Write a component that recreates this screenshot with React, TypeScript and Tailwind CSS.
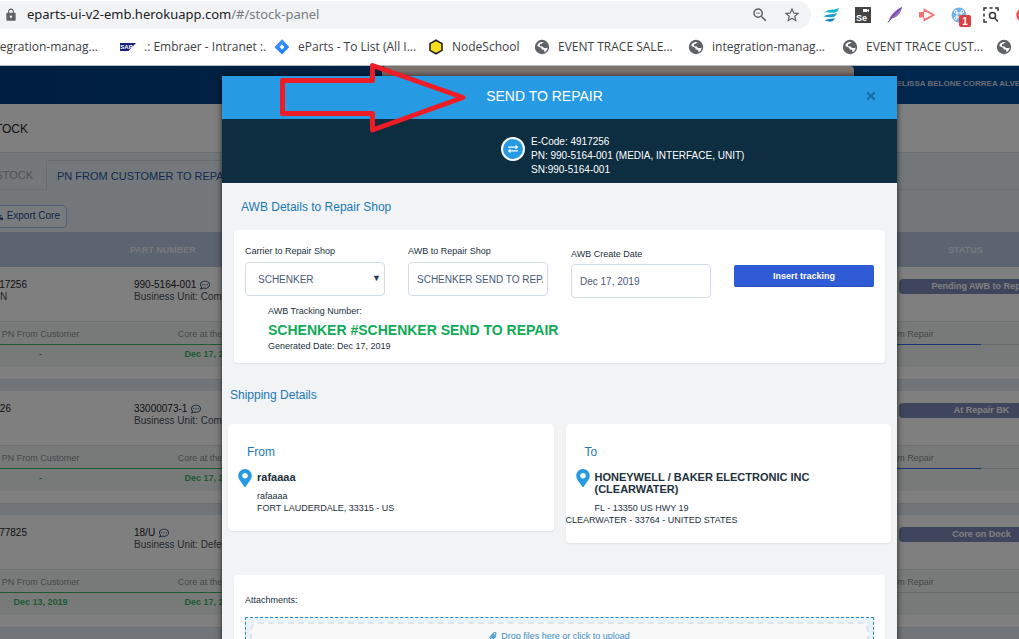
import type { ReactNode } from "react";
import { MdLock, MdStarBorder, MdZoomOut } from "react-icons/md";
import { FaDownload, FaExchangeAlt, FaMapMarkerAlt, FaPaperclip, FaRegCommentDots, FaTimes } from "react-icons/fa";

function GlobeIcon() {
  return (
    <svg viewBox="0 0 16 16" className="size-4 shrink-0">
      <circle cx="8" cy="8" r="7.2" fill="#5f6368" />
      <path
        d="M10 3.200 8.800 3.400 8 4.600 6 5.200v2l2.800.4 1 1.400h3l.8-.6c0 2.200-1.300 3.800-3 4.700l-.6-2.300-2.200-.3-.6-1.700-3.800-1.800C3.300 5 6 2.200 10 3.200Z"
        fill="#fff"
      />
    </svg>
  );
}

function SapIcon() {
  return (
    <svg viewBox="0 0 16 16" className="size-4 shrink-0">
      <path d="M0 4h16l-7.500 8H0Z" fill="#16227c" />
      <text x="0.300" y="10" fontSize="6" fontWeight="700" fill="#fff" fontFamily="Liberation Sans, sans-serif">
        SAP
      </text>
    </svg>
  );
}

function JiraIcon() {
  return (
    <svg viewBox="0 0 16 16" className="size-4 shrink-0">
      <path d="M8 .6 15.400 8 8 15.400.6 8Z" fill="#2684ff" />
      <path d="M8 .6 11 3.600 8 6 5.500 8 3 10.500.6 8Z" fill="#3b8fff" />
      <path d="M8 5.600 10.400 8 8 10.400 5.600 8Z" fill="#fff" />
    </svg>
  );
}

function HexIcon() {
  return (
    <svg viewBox="0 0 16 16" className="size-4 shrink-0">
      <path d="M8 1.200 14 4.600v6.800L8 14.800 2 11.400V4.600Z" fill="#f7df1e" stroke="#222" strokeWidth="1.600" />
    </svg>
  );
}

function Bookmark({ icon, label, narrow }: { icon: ReactNode; label: string; narrow?: boolean }) {
  return (
    <a href="#" className={`flex shrink-0 items-center gap-2 ${narrow ? "w-[106px]" : "w-[154px]"}`}>
      {icon}
      <span>{label}</span>
    </a>
  );
}

function Extensions() {
  return (
    <div className="flex shrink-0 items-center gap-4">
      <svg viewBox="0 0 16 16" className="size-4">
        <path d="M2 5.500C5 1.500 8 4 16 1c-1 4-3 4.500-6 4.800C7 6 4 5 2 5.500Z" fill="#16b5d8" />
        <path d="M.5 10C4 6 8 8.500 14 6c-1 3-3 4-6 4.200-3 .2-5-.8-7.500-.2Z" fill="#169fd0" />
        <path d="M2 14c2-3 5-1.500 10-3-1 3-3 3.600-5 3.700-2 .1-3-.9-5-.7Z" fill="#1687c4" />
      </svg>
      <svg viewBox="0 0 16 16" className="size-4">
        <path d="M0 0h16v16H0Z" fill="#444" />
        <path d="M8 2h4v3H8Zm4 1 2-1v3l-2-1Z" fill="#fff" />
        <text x="1" y="13.500" fontSize="9" fontWeight="700" fill="#fff" fontFamily="Liberation Sans, sans-serif">
          Se
        </text>
      </svg>
      <svg viewBox="0 0 16 16" className="size-4">
        <path d="M2 14C3 8 8 3 15 0c-1 6-4 10-10 11.500Z" fill="#9a6cc0" />
        <path d="M1 15.500C5 10 8 6 14.500.5" stroke="#5a2c86" strokeWidth="1" fill="none" />
      </svg>
      <svg viewBox="0 0 16 16" className="size-4" fill="none" stroke="#fa7070" strokeWidth="2">
        <path d="M5.500 5V3L14.500 8 5.500 13V11" />
        <path d="M0 5h5v5.500H0Z" fill="#fa7070" stroke="none" />
      </svg>
      <div className="relative">
        <svg viewBox="0 0 16 16" className="size-4">
          <circle cx="8" cy="8" r="7.500" fill="#75b3ec" />
          <path
            d="M6 6h4v4H6ZM6 6H4.700A1.300 1.300 0 1 1 6 4.700Zm4 0V4.700A1.300 1.300 0 1 1 11.300 6Zm0 4h1.300A1.300 1.300 0 1 1 10 11.300Zm-4 0v1.300A1.300 1.300 0 1 1 4.700 10Z"
            fill="none"
            stroke="#fff"
          />
        </svg>
        <span className="absolute top-2 left-2 flex h-3 w-3 items-center justify-center rounded-xs bg-[#dc4040] font-['Liberation_Sans',sans-serif] text-[10px] font-bold text-white">
          1
        </span>
      </div>
      <svg viewBox="0 0 16 16" className="size-4" fill="none" stroke="#333" strokeWidth="1.500">
        <path d="M1 4V1h3M6.500 1h3M12 1h3v3M1 6.500v3M1 12v3h3" />
        <circle cx="9.500" cy="8.500" r="3" />
        <path d="m11.800 11 3 3.500" />
      </svg>
      <svg viewBox="0 0 16 16" className="size-4">
        <circle cx="8" cy="8" r="5.500" fill="none" stroke="#f34d4d" strokeWidth="2.500" />
      </svg>
    </div>
  );
}

function BrowserBar() {
  return (
    <div className="shrink-0 border-b border-[#b8bbbe] bg-white font-['Open_Sans',sans-serif] text-[#3c4043]">
      <div className="flex items-center gap-3 pt-px">
        <div className="flex h-7 w-[811px] shrink-0 items-center rounded-r-full bg-[#f1f3f4] pr-2.5 pl-1">
          <MdLock className="size-3.5 text-[#5f6368]" />
          <span className="flex-1 pl-[9px] font-['Noto_Sans',sans-serif] text-[13px] text-[#202124]">
            eparts-ui-v2-emb.herokuapp.com<span className="text-[#777b80]">/#/stock-panel</span>
          </span>
          <button aria-label="Zoom" className="mr-3.5">
            <MdZoomOut className="size-[18px] text-[#5f6368]" />
          </button>
          <button aria-label="Bookmark this page">
            <MdStarBorder className="size-[18px] text-[#5f6368]" />
          </button>
        </div>
        <Extensions />
      </div>
      <nav className="flex h-9 items-center overflow-hidden text-xs whitespace-nowrap">
        <a href="#" className="flex w-[120px] shrink-0">
          <span className="flex w-[98px] justify-end">integration-manag...</span>
        </a>
        <Bookmark icon={<SapIcon />} label=".: Embraer - Intranet :." />
        <Bookmark icon={<JiraIcon />} label="eParts - To List (All I..." />
        <Bookmark icon={<HexIcon />} label="NodeSchool" narrow />
        <Bookmark icon={<GlobeIcon />} label="EVENT TRACE SALE..." />
        <Bookmark icon={<GlobeIcon />} label="integration-manag..." />
        <Bookmark icon={<GlobeIcon />} label="EVENT TRACE CUST..." />
        <GlobeIcon />
      </nav>
    </div>
  );
}

type Item = {
  code: string;
  codeWidth: string;
  note: string;
  part: string;
  unit: string;
  status: string;
  received: string;
  repairLine: string;
};

const items: Item[] = [
  { code: "4917256", codeWidth: "w-[27px]", note: "N", part: "990-5164-001", unit: "Commercial", status: "Pending AWB to Repair", received: "-", repairLine: "border-[#2f6df0]" },
  { code: "026", codeWidth: "w-[11px]", note: "", part: "33000073-1", unit: "Commercial", status: "At Repair BK", received: "-", repairLine: "border-[#2f6df0]" },
  { code: "77825", codeWidth: "w-[27px]", note: "", part: "18/U", unit: "Defense", status: "Core on Dock", received: "Dec 13, 2019", repairLine: "border-[#d0d6da]" },
];

function Step({ label, value, line }: { label: string; value: string; line: string }) {
  return (
    <div className="w-[171px] shrink-0 text-center">
      <div className={`h-[23px] border-b pt-1.5 text-[#8c9094] ${line}`}>{label}</div>
      <div className="pt-[3px] font-bold text-[#3cb667]">{value}</div>
    </div>
  );
}

function StockItem({ item }: { item: Item }) {
  return (
    <tbody>
      <tr className="h-[54px] bg-white align-top">
        <td className="pt-3">
          <div className={`flex justify-end whitespace-nowrap text-[#22262c] ${item.codeWidth}`}>{item.code}</div>
          <div>{item.note}</div>
        </td>
        <td className="pt-3">
          <div className="flex items-center gap-1 text-[#22262c]">
            {item.part} <FaRegCommentDots className="size-2.5 text-[#3a5a7c]" />
          </div>
          <div>Business Unit: {item.unit}</div>
        </td>
        <td className="pt-3 pl-0.5">
          <div className="h-[15px] rounded-sm bg-[#7f8bb8] text-center text-[9px] leading-[15px] font-bold text-white">
            {item.status}
          </div>
        </td>
      </tr>
      <tr className="bg-white align-top">
        <td colSpan={3} className="h-[58px] p-0">
          <div className="-ml-[45px] flex h-[46px] border-t border-[#dde3e6] bg-[#f0f5f3] text-[9px]">
            <Step label="PN From Customer" value={item.received} line="border-[#3cb667]" />
            <Step label="Core at the Dock" value="Dec 17, 2019" line="border-[#3cb667]" />
            <Step label="" value="" line="border-[#3cb667]" />
            <Step label="" value="" line="border-[#3cb667]" />
            <Step label="" value="" line="border-[#3cb667]" />
            <Step label="Return from Repair" value="" line={item.repairLine} />
            <Step label="" value="" line="border-[#d0d6da]" />
          </div>
        </td>
      </tr>
      <tr aria-hidden="true">
        <td colSpan={3} className="h-3 border-t border-[#d3dce4] bg-[#e2eaf2] p-0" />
      </tr>
    </tbody>
  );
}

function StockPage() {
  return (
    <div className="h-full overflow-hidden bg-[#e8f1f6] text-[10px] leading-3 text-[#4c525c]">
      <header className="flex h-[38px] bg-linear-to-r from-[#003e80] to-[#00509e]">
        <div className="ml-[382px] w-[472px] shrink-0 rounded-t-sm bg-[#fae6e2]" />
        <div className="ml-9 pt-3 text-[8px] font-bold whitespace-nowrap text-[#d0d8e4]">MELISSA BELONE CORREA ALVES</div>
      </header>
      <div className="flex h-12 items-center bg-white pt-0.5 text-xs text-[#22262c]">
        <h1 className="flex w-7 justify-end font-medium">STOCK</h1>
      </div>
      <nav className="flex h-[38px] items-end border-t border-[#d5dfe6] text-[11px]">
        <a href="#" className="flex h-[30px] w-[46px] items-center border-b border-[#d5dfe6] text-[#9ca4aa]">
          <span className="flex w-[33px] justify-end">STOCK</span>
        </a>
        <a
          href="#"
          className="flex h-[30px] items-center rounded-t-sm border border-b-0 border-[#cdd9e4] px-2.5 whitespace-nowrap text-[#2558a8]"
        >
          PN FROM CUSTOMER TO REPAIR
        </a>
        <span className="h-full flex-1 border-b border-[#d5dfe6]" />
      </nav>
      <div className="flex h-[42px] items-center pt-2.5">
        <button className="-ml-3 flex h-[23px] w-[79px] items-center justify-end gap-1 rounded-sm border border-[#9dbcf0] bg-[#f1f6fa] pr-1.5 whitespace-nowrap text-[#1d4d95]">
          <FaDownload className="size-2 shrink-0" /> Export Core
        </button>
      </div>
      <table className="w-[calc(100%+45px)] table-fixed border-separate border-spacing-0 text-left">
        <colgroup>
          <col className="w-[134px]" />
          <col />
          <col className="w-[167px]" />
        </colgroup>
        <thead>
          <tr className="h-[35px] bg-[#b8c8e0] text-[9px] text-[#eef2f8]">
            <th />
            <th><span className="-ml-1">PART NUMBER</span></th>
            <th className="pl-[51px]">STATUS</th>
          </tr>
        </thead>
        {items.map((item) => (
          <StockItem key={item.part} item={item} />
        ))}
      </table>
    </div>
  );
}

const fieldBox =
  "h-[34px] w-full rounded-sm border border-[#d3daea] bg-white text-[10px] text-[#4a5878] outline-none";
const panel = "rounded-sm bg-white shadow-[0_1px_2px_rgba(0,0,0,0.08)]";

function Address({ title, name, lines }: { title: string; name: string; lines: ReactNode }) {
  return (
    <section className={`pt-5 pb-[9px] ${panel}`}>
      <h3 className="pl-[19px] text-xs text-[#2079b4]">{title}</h3>
      <div className="mt-[11px] flex gap-1 pl-[9px]">
        <FaMapMarkerAlt className="-mt-0.5 -mb-1.5 h-[18px] w-4 shrink-0 text-[#279ae4]" />
        <h4 className="w-[240px] text-[11px] leading-3 font-bold text-[#22303c]">{name}</h4>
      </div>
      <div className="mt-[7px] pb-2 leading-3">{lines}</div>
    </section>
  );
}

function RepairDialog() {
  return (
    <div role="dialog" aria-label="Send to repair" className="w-[675px] shrink-0 bg-[#f1f3f5] text-[9px] text-[#22303c] shadow-[0_0_6px_rgba(0,0,0,0.7)]">
      <div className="flex h-[43px] items-center bg-[#279ae4] pr-5 pb-1">
        <h2 className="flex-1 pl-0.5 text-center text-sm text-white">SEND TO REPAIR</h2>
        <button aria-label="Close" className="text-[#1a6ca6]">
          <FaTimes className="size-3" />
        </button>
      </div>
      <div className="flex h-16 gap-1.5 bg-[#0d2d40] pt-4 pl-[279px]">
        <span className="mt-0.5 flex size-6 items-center justify-center rounded-full border-2 border-white bg-[#279ae4]">
          <FaExchangeAlt className="size-2.5 text-white" />
        </span>
        <p className="text-[10px] leading-3.5 font-medium whitespace-nowrap text-white">
          E-Code: 4917256
          <br />
          PN: 990-5164-001 (MEDIA, INTERFACE, UNIT)
          <br />
          SN:990-5164-001
        </p>
      </div>

      <h3 className="pt-4 pl-[19px] text-xs text-[#2079b4]">AWB Details to Repair Shop</h3>
      <section className={`mx-3 mt-[15px] h-[133px] px-[11px] pt-[15px] ${panel}`}>
        <div className="grid grid-cols-4 gap-x-[23px]">
          <div>
            <label htmlFor="carrier" className="mb-[5px] block leading-3">Carrier to Repair Shop</label>
            <div className="relative">
              <select id="carrier" className={`appearance-none pl-3 ${fieldBox}`}>
                <option>SCHENKER</option>
              </select>
              <span className="pointer-events-none absolute top-2.5 right-1 text-[9px] text-[#2c3c58]">▼</span>
            </div>
          </div>
          <div>
            <label htmlFor="awb" className="mb-[5px] block leading-3">AWB to Repair Shop</label>
            <input id="awb" defaultValue="SCHENKER SEND TO REPAIR" className={`pr-1 pl-2 ${fieldBox}`} />
          </div>
          <div className="pt-[3px]">
            <label htmlFor="date" className="mb-1 block leading-3">AWB Create Date</label>
            <input id="date" defaultValue="Dec 17, 2019" className={`px-2 ${fieldBox}`} />
          </div>
          <div className="pt-5">
            <button className="h-[22px] w-full rounded-xs border-b border-[#284bb8] bg-[#305bd6] pt-0.5 text-[9px] font-bold text-white">
              Insert tracking
            </button>
          </div>
        </div>
        <div className="pt-[7px] pl-[23px] leading-3">
          <p>AWB Tracking Number:</p>
          <p className="pt-1.5 pb-0.5 text-sm leading-[15px] font-bold text-[#10ab58]">SCHENKER #SCHENKER SEND TO REPAIR</p>
          <p>Generated Date: Dec 17, 2019</p>
        </div>
      </section>

      <h3 className="pt-6 pl-2 text-xs text-[#2079b4]">Shipping Details</h3>
      <div className="mt-[21px] grid grid-cols-2 items-start gap-3 px-1.5">
        <Address
          title="From"
          name="rafaaaa"
          lines={
            <div className="pl-[29px]">
              <p>rafaaaa</p>
              <p>FORT LAUDERDALE, 33315 - US</p>
            </div>
          }
        />
        <Address
          title="To"
          name="HONEYWELL / BAKER ELECTRONIC INC (CLEARWATER)"
          lines={
            <>
              <p className="pl-[29px]">FL - 13350 US HWY 19</p>
              <p>CLEARWATER - 33764 - UNITED STATES</p>
            </>
          }
        />
      </div>

      <section className={`mx-3 mt-8 px-[11px] py-[19px] ${panel}`}>
        <p className="leading-3">Attachments:</p>
        <button className="mt-[11px] block w-full border border-dashed border-[#2f88c4] bg-[#eaf2f9] p-1">
          <span className="flex h-24 justify-center gap-1 rounded-lg border-2 border-dashed border-[#dde6ee] bg-[#f8f8f8] pt-1.5 leading-3 text-[#3c90c8]">
            <FaPaperclip className="mt-0.5 size-2" /> Drop files here or click to upload
          </span>
        </button>
      </section>
    </div>
  );
}

export default function App() {
  return (
    <div className="relative flex h-screen flex-col overflow-hidden">
      <BrowserBar />
      <main className="relative min-h-0 flex-1 font-['Liberation_Sans',Arial,sans-serif]">
        <StockPage />
        <div className="absolute inset-0 flex items-start justify-center overflow-hidden bg-black/50 pt-2.5 pl-[100px]">
          <RepairDialog />
        </div>
      </main>
      <svg viewBox="0 0 190 74" className="pointer-events-none absolute top-[60px] left-[278px] h-[74px] w-[190px]">
        <path
          d="M4.500 20.500h90V5.500L185 37.500 94.500 70V53.500h-90Z"
          fill="none"
          stroke="#ee1c25"
          strokeWidth="5"
          strokeLinejoin="round"
        />
      </svg>
    </div>
  );
}
